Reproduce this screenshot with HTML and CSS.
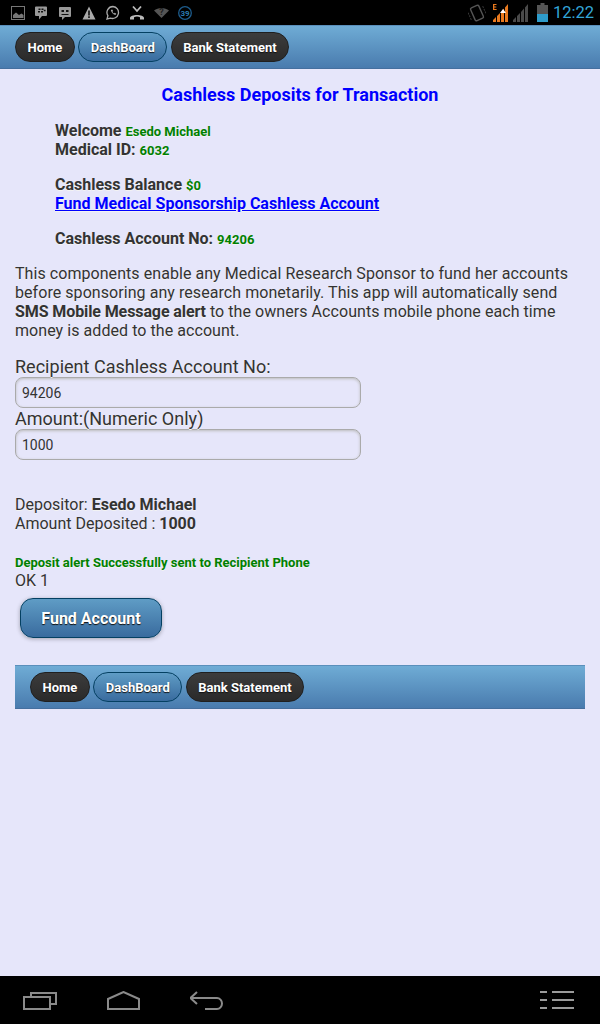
FILE: index.html
```html
<!DOCTYPE html>
<html lang="en">
<head>
<meta charset="utf-8">
<title>Cashless Deposits</title>
<link rel="stylesheet" href="styles.css">
</head>
<body>
<div class="status">
  <div class="status-icons">
    <svg class="si" width="16" height="18" viewBox="0 0 16 18"><rect x="1.500" y="2.500" width="13" height="13" fill="none" stroke="#777" stroke-width="1"/><path d="M3 14v-3l3-2.500 3 2.500 2.500-1.500 2 1.500v3z" fill="#777"/></svg>
    <svg class="si" width="16" height="18" viewBox="0 0 16 18"><path d="M2 2.500h10a1 1 0 0 1 1 1v7.500a1 1 0 0 1-1 1H8l-3 3.500V12H2a1 1 0 0 1-1-1V3.500a1 1 0 0 1 1-1z" fill="#999"/><path d="M4.500 4.500h2V6h-2zM7.500 4.500h2V6h-2zM4 7h2v1.500H4zM7 7h2v1.500H7zM9.800 5.800h1.800v1.400H9.800z" fill="#111"/></svg>
    <svg class="si" width="16" height="18" viewBox="0 0 16 18"><path d="M2 3h10a1 1 0 0 1 1 1v8a1 1 0 0 1-1 1H7l-3 3v-3H2a1 1 0 0 1-1-1V4a1 1 0 0 1 1-1z" fill="#999"/><path d="M3.500 6h2.500v2H3.500zM8 6h2.500v2H8zM3.500 10h7v1h-7z" fill="#111"/></svg>
    <svg class="si" width="16" height="18" viewBox="0 0 16 18"><path d="M7 2.500l6.500 13H.5z" fill="#aaa"/><path d="M6.200 6.500h1.600v5H6.200zM6.200 12.300h1.600v1.600H6.200z" fill="#111"/></svg>
    <svg class="si" width="16" height="18" viewBox="0 0 16 18"><path d="M7 2.500a6 6 0 0 0-5.100 9.200L1 15l3.400-.9A6 6 0 1 0 7 2.500z" fill="none" stroke="#aaa" stroke-width="1.300"/><path d="M4.800 6c1 3 2 4 4.500 5l1-1.300-1.600-1-.7.700c-.8-.4-1.200-1-1.600-1.700l.7-.7-.9-1.600z" fill="#aaa"/></svg>
    <svg class="si" width="16" height="18" viewBox="0 0 16 18"><path d="M3 2.500l4 4.500 4-4.500" fill="none" stroke="#bbb" stroke-width="1.800"/><path d="M0 14c0-4 14-4 14 0v1.500h-4v-2.300c-2-.8-4-.8-6 0v2.300H0z" fill="#bbb"/></svg>
    <svg class="si" width="16" height="18" viewBox="0 0 16 18"><path d="M0 6.500C4 3 11 3 15 6.500L7.500 14z" fill="#555"/><text x="7.500" y="11" class="si-q">?</text></svg>
    <svg class="si" width="16" height="18" viewBox="0 0 16 18"><circle cx="7" cy="9" r="6.300" fill="none" stroke="#1d5c8c" stroke-width="1.300"/><text x="7" y="11.800" class="si-n">39</text></svg>
  </div>
  <div class="status-right">
    <svg class="sr-rotate" width="18" height="20" viewBox="0 0 18 20"><g transform="rotate(-24 9 10)"><rect x="4.500" y="3" width="9" height="14" rx="1.500" fill="none" stroke="#555" stroke-width="1.400"/><path d="M1 6v8M17 6v8" stroke="#3a3a3a" stroke-width="1" stroke-dasharray="2 1"/></g></svg>
    <svg class="sr-sig" width="17" height="19" viewBox="0 0 17 19"><path d="M1 19v-2l3-3v5zM5 19v-6l3-3v9zM9 19V9l3-3.500V19zM13 19V4.500L16 1v18z" fill="#e8791e"/><path d="M1 1h3.500v1H2.300v1.500h2v1h-2V6h2.300v1H1z" fill="#e8791e"/><path d="M8 10l3-4 3 4z" fill="#fff"/></svg>
    <svg class="sr-sig2" width="16" height="19" viewBox="0 0 16 19"><path d="M0 19v-2l3-3v5zM4 19v-6l3-3v9zM8 19V9l3-3.500V19zM12 19V4.500L15 1v18z" fill="#4a4a4a"/></svg>
    <svg class="sr-bat" width="11" height="20" viewBox="0 0 11 20"><rect x="3.500" y="0" width="4" height="2" fill="#555"/><rect x="0" y="2" width="11" height="17" fill="#555"/><rect x="0" y="11" width="11" height="8" fill="#2e9ccb"/></svg>
    <span class="clock">12:22</span>
  </div>
</div>

<header class="bar">
  <a class="pill dark">Home</a>
  <a class="pill blue">DashBoard</a>
  <a class="pill dark">Bank Statement</a>
</header>

<main class="content">
  <h1 class="title">Cashless Deposits for Transaction</h1>
  <div class="info">
    <p class="info-group"><b>Welcome</b> <b class="green">Esedo Michael</b><br><b>Medical ID:</b> <b class="green">6032</b></p>
    <p class="info-group info-mid"><b>Cashless Balance</b> <b class="green">$0</b><br><a class="link">Fund Medical Sponsorship Cashless Account</a></p>
    <p class="info-group info-last"><b>Cashless Account No:</b> <b class="green">94206</b></p>
  </div>
  <p class="desc">This components enable any Medical Research Sponsor to fund her accounts before sponsoring any research monetarily. This app will automatically send <b>SMS Mobile Message alert</b> to the owners Accounts mobile phone each time money is added to the account.</p>
  <form class="form">
    <label class="label">Recipient Cashless Account No:</label>
    <input class="field" value="94206">
    <label class="label">Amount:(Numeric Only)</label>
    <input class="field" value="1000">
  </form>
  <p class="summary">Depositor: <b>Esedo Michael</b><br>Amount Deposited : <b>1000</b></p>
  <p class="alert">Deposit alert Successfully sent to Recipient Phone</p>
  <p class="ok">OK 1</p>
  <button class="fund" type="button">Fund Account</button>
  <footer class="bar bar-foot">
    <a class="pill dark">Home</a>
    <a class="pill blue">DashBoard</a>
    <a class="pill dark">Bank Statement</a>
  </footer>
</main>

<nav class="softkeys">
  <div class="softkeys-left">
    <svg width="34" height="19" viewBox="0 0 34 19"><path d="M1 6h26v12H1z M8 6V2h25v11h-6" fill="none" stroke="#8a8a8a" stroke-width="2"/></svg>
    <svg width="33" height="19" viewBox="0 0 33 19"><path d="M1 18V8L16.500 1 32 8v10z" fill="none" stroke="#8a8a8a" stroke-width="2"/></svg>
    <svg width="34" height="19" viewBox="1 0 34 19"><path d="M8 1L1.500 7 8 13M2 7h26a5 5.500 0 0 1 0 11H16" fill="none" stroke="#8a8a8a" stroke-width="2"/></svg>
  </div>
  <svg width="34" height="18" viewBox="0 0 34 18"><path d="M0 1h7M12 1h22M0 9h7M12 9h22M0 17h7M12 17h22" stroke="#9a9a9a" stroke-width="2"/></svg>
</nav>
</body>
</html>
```
FILE: styles.css
```css
* { box-sizing: border-box; }
html, body { margin: 0; height: 1024px; }
body {
  width: 600px;
  display: flex;
  flex-direction: column;
  background: #e6e6fa;
  color: #333;
  font-family: Roboto, "Liberation Sans", sans-serif;
  font-size: 16px;
  line-height: 18px;
  overflow: hidden;
}
p { margin: 0; }
b { font-weight: 700; }

.status {
  height: 25px;
  flex: none;
  background: #000;
  display: flex;
  align-items: center;
  justify-content: space-between;
  padding: 0 6px 0 10px;
}
.status-icons { display: flex; gap: 8px; align-items: center; }
.status-right { display: flex; align-items: center; }
.sr-rotate { margin-right: 6px; }
.sr-sig { margin-right: 4px; }
.sr-sig2 { margin-right: 8px; }
.sr-bat { margin-right: 5px; }
.si-q { font: 700 9px Roboto, sans-serif; fill: #222; text-anchor: middle; }
.si-n { font: 700 8px Roboto, sans-serif; fill: #2a78b0; text-anchor: middle; }
.clock { font-size: 16.500px; color: #33a6d8; }

.bar {
  height: 44px;
  flex: none;
  display: flex;
  align-items: center;
  gap: 3.500px;
  padding: 0 15px;
  background: linear-gradient(#6facd5, #497bae);
  border-top: 1px solid #5a8fbb;
  border-bottom: 1px solid #456f9e;
}
.pill {
  height: 30px;
  padding: 1px 11.500px 0;
  display: flex;
  align-items: center;
  border-radius: 15px;
  font-size: 13px;
  font-weight: 700;
  color: #fff;
  text-shadow: 0 1px 1px #111;
}
.dark {
  background: linear-gradient(#3c3c3c, #2a2a2a);
  border: 1px solid #1f1f1f;
}
.blue {
  background: linear-gradient(#5f9cc5, #396b9e);
  border: 1px solid #044062;
}

.content { flex: 1; padding: 0 15px; text-shadow: 0 1px 0 #f3f3f3; }
.title {
  margin: 16px 0 0;
  text-align: center;
  font-size: 18px;
  line-height: 20px;
  font-weight: 700;
  color: #00f;
}
.info { margin: 17px 0 0 40px; }
.info-group { margin-bottom: 16px; }
.info-mid { margin-bottom: 17px; }
.info-last { margin-bottom: 15px; }
.green { color: #008000; font-size: 13px; }
.link { color: #00f; font-weight: 700; text-decoration: underline; }
.desc { line-height: 19px; letter-spacing: .06px; }
.desc b { letter-spacing: -.1px; }
.form { margin-top: 16px; }
.label { display: block; font-size: 18px; line-height: 21px; letter-spacing: .02px; }
.field {
  display: block;
  width: 346px;
  height: 31px;
  padding: 0 6px;
  border: 1px solid #aaa;
  border-radius: 8px;
  background: #e6e6fa;
  box-shadow: inset 0 1px 3px #bbb;
  color: #333;
  font: 14px Roboto, sans-serif;
}
.summary { margin-top: 35px; line-height: 19px; }
.alert { margin-top: 21px; color: #008000; font-size: 13px; font-weight: 700; }
.ok { margin-top: 0; }
.fund {
  display: block;
  width: 142px;
  height: 40px;
  margin: 8px 0 0 5px;
  border: 1px solid #044062;
  border-radius: 13px;
  background: linear-gradient(#5f9cc5, #396b9e);
  box-shadow: 0 1px 4px rgba(0,0,0,.3);
  color: #fff;
  font: 700 16px Roboto, sans-serif;
  text-shadow: 0 1px 1px #111;
}
.bar-foot { margin-top: 27px; text-shadow: none; }

.softkeys {
  height: 48px;
  flex: none;
  background: #000;
  display: flex;
  align-items: center;
  justify-content: space-between;
  padding: 0 26px 0 23px;
}
.softkeys-left { display: flex; gap: 50px; align-items: center; }
```
